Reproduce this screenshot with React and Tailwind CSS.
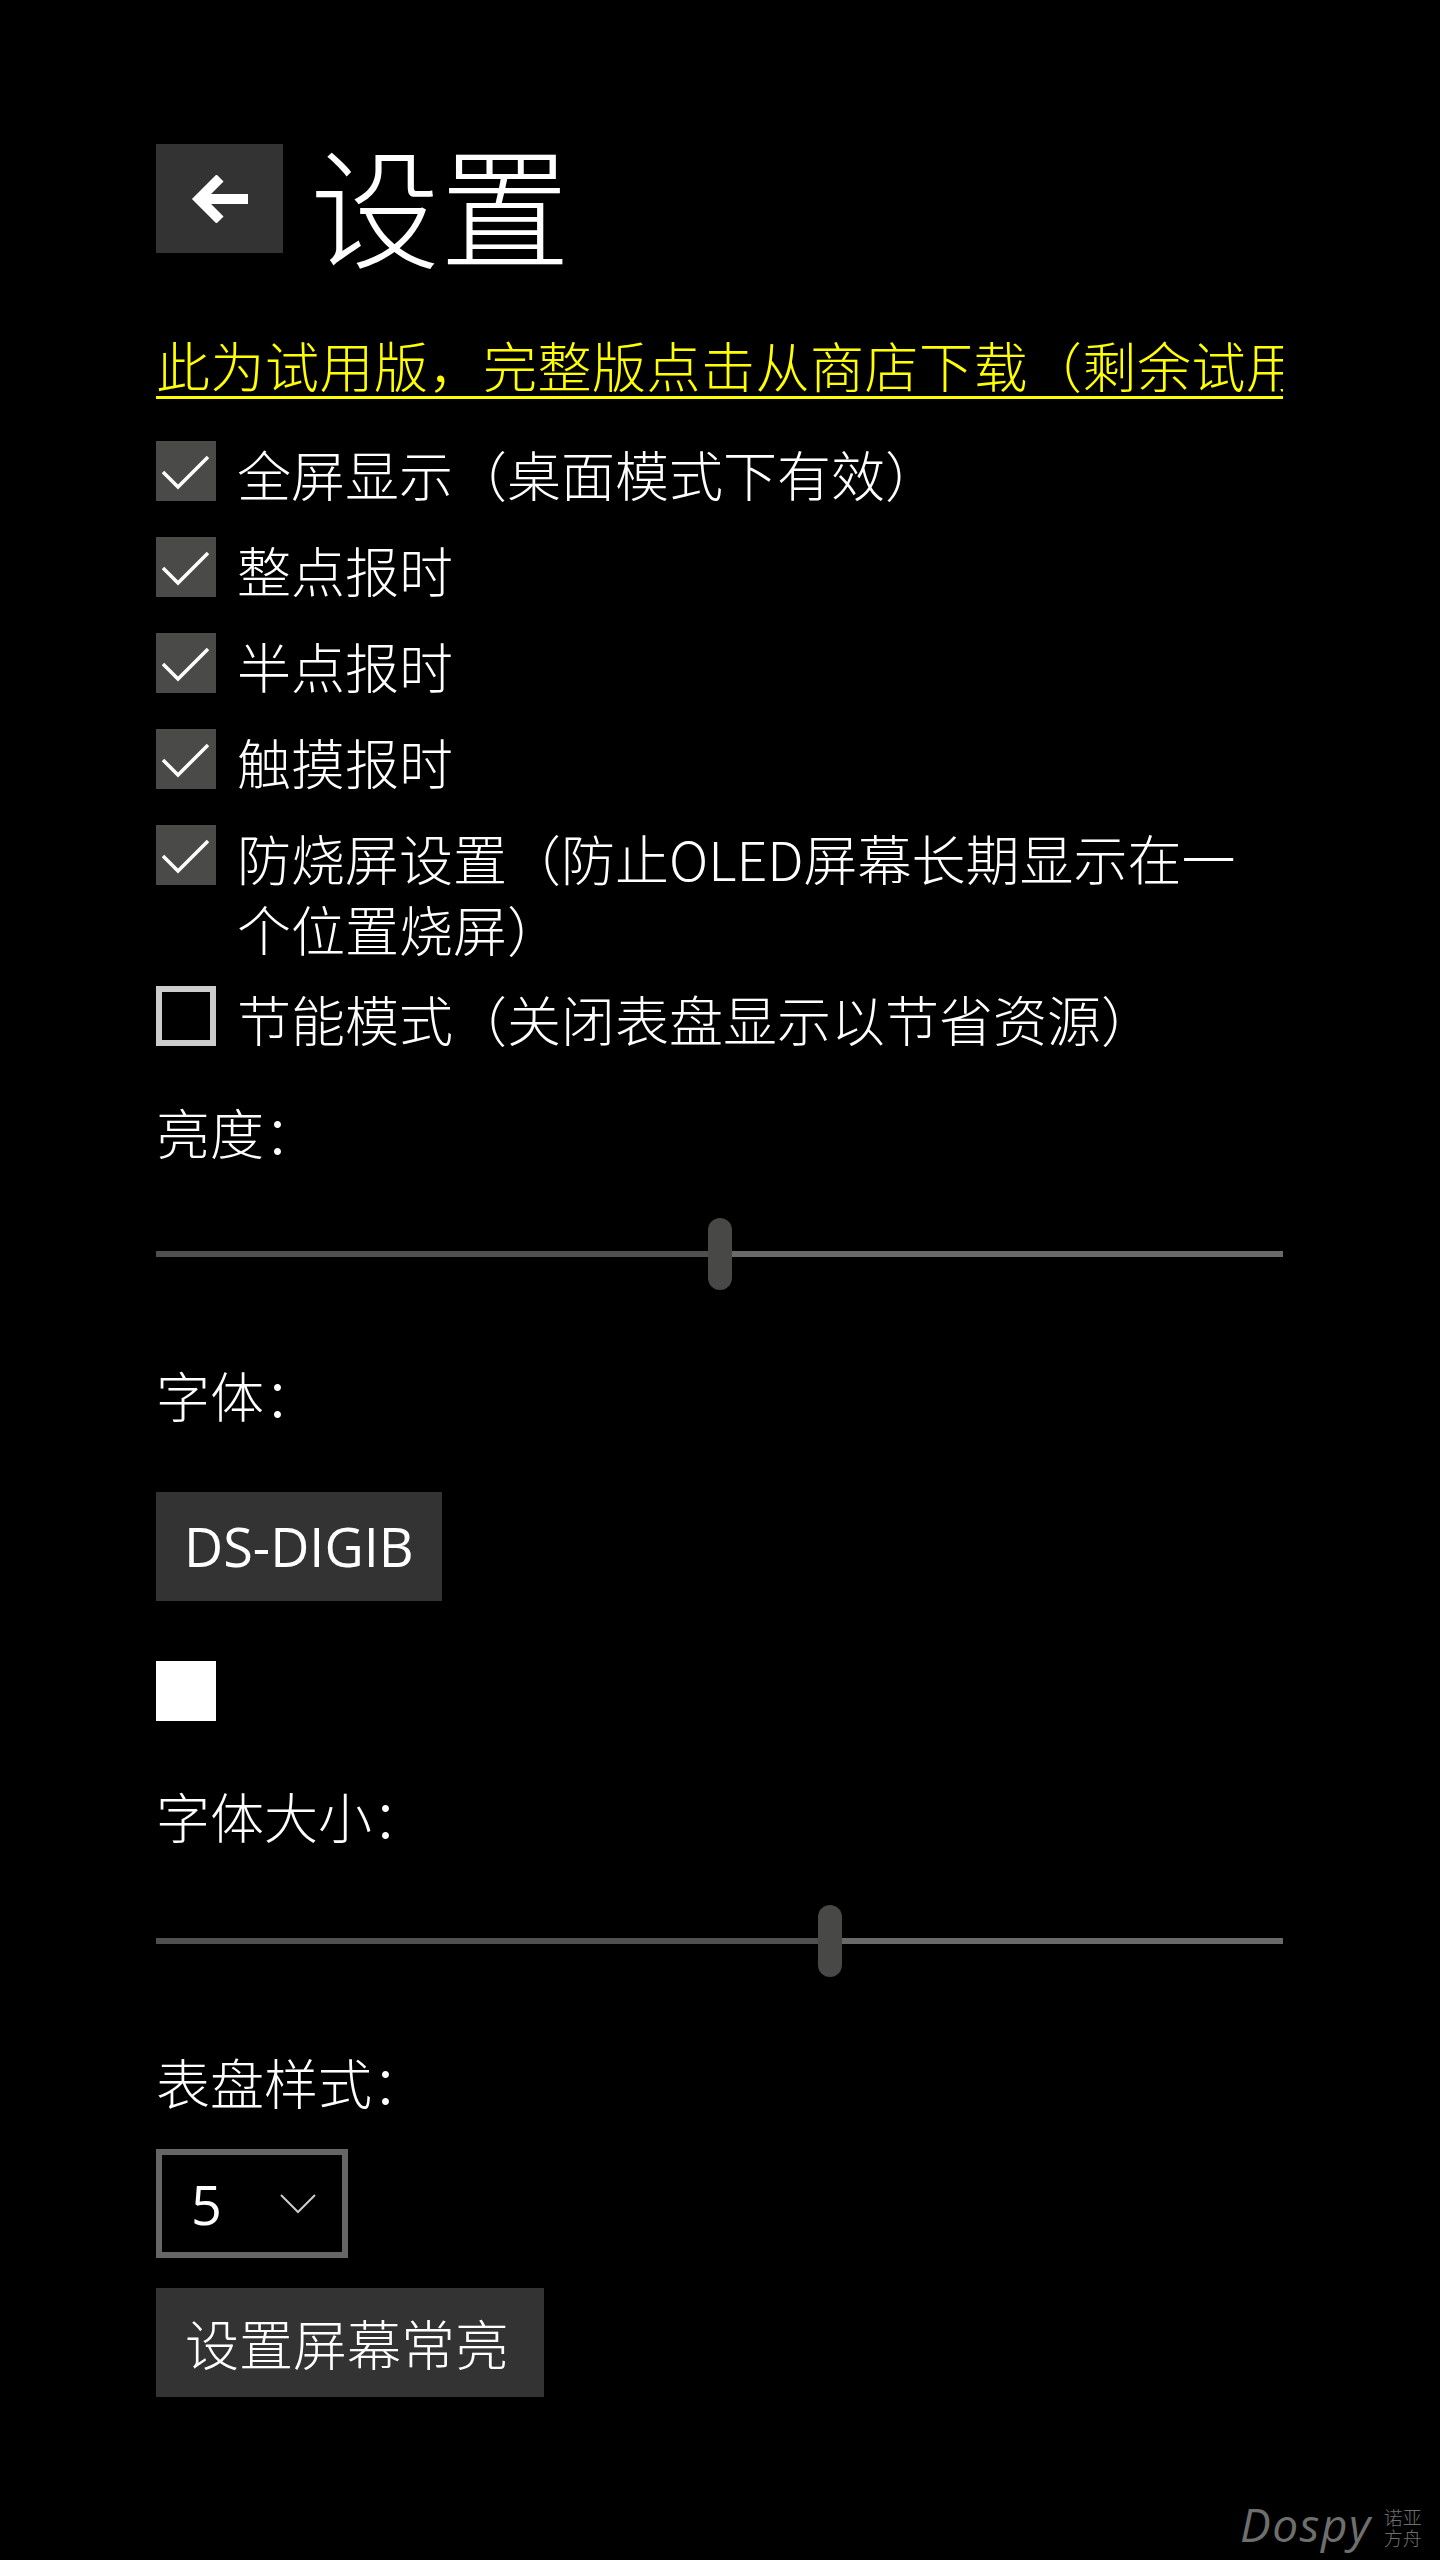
import React from "react";

const cjk = { fontFamily: '"Noto Sans CJK SC", "Noto Sans", sans-serif' };
const latin = { fontFamily: '"Open Sans", "Noto Sans CJK SC", sans-serif' };

function CheckBox({ checked }) {
  if (!checked) {
    return <div className="w-[60px] h-[60px] shrink-0 mt-[3px] border-[6px] border-[#cccccc]" />;
  }
  return (
    <div className="w-[60px] h-[60px] shrink-0 mt-[3px] bg-[#4a4a48]">
      <svg width="60" height="60" viewBox="0 0 60 60" fill="none">
        <path d="M7 31 L22 46 L52 16" stroke="white" strokeWidth="3.5" />
      </svg>
    </div>
  );
}

function Row({ checked, tall, children }) {
  return (
    <div className={`flex items-start gap-[21px] ${tall ? "h-[161px]" : "h-[96px]"}`}>
      <CheckBox checked={checked} />
      <div className="text-[54px] leading-[71px] font-light text-white">{children}</div>
    </div>
  );
}

function Slider({ value }) {
  return (
    <div className="flex items-center h-[72px] w-full">
      <div className="h-[6px] bg-[#4f4f4f] basis-0" style={{ flexGrow: value }} />
      <div className="w-[24px] h-[72px] rounded-full bg-[#484846] shrink-0" />
      <div className="h-[6px] bg-[#6a6a6a] basis-0" style={{ flexGrow: 100 - value }} />
    </div>
  );
}

export default function App() {
  return (
    <div className="relative w-[1440px] min-h-[2560px] bg-black text-white pl-[156px] pr-[157px] pt-[136px] font-light" style={cjk}>
      {/* Header */}
      <div className="flex items-start">
        <button className="mt-[8px] w-[127px] h-[109px] bg-[#333333] flex items-center justify-center">
          <svg width="60" height="48" viewBox="0 0 60 48" fill="none">
            <path d="M58 24 H8" stroke="white" strokeWidth="10" />
            <path d="M30 3 L9 24 L30 45" stroke="white" strokeWidth="10" />
          </svg>
        </button>
        <h1 className="ml-[27px] text-[130px] leading-[130px] font-light">设置</h1>
      </div>

      {/* Trial link */}
      <div className="mt-[63px] h-[71px] overflow-hidden whitespace-nowrap text-[54px] leading-[71px] tracking-[0.5px] text-[#ffff00] underline decoration-[3px] underline-offset-[8px]">
        此为试用版，完整版点击从商店下载（剩余试用期7天）
      </div>

      {/* Options */}
      <div className="mt-[38px] flex flex-col">
        <Row checked>全屏显示（桌面模式下有效）</Row>
        <Row checked>整点报时</Row>
        <Row checked>半点报时</Row>
        <Row checked>触摸报时</Row>
        <Row checked tall>
          防烧屏设置（防止OLED屏幕长期显示在一
          <br />
          个位置烧屏）
        </Row>
        <div className="flex items-start gap-[21px] h-[71px]">
          <CheckBox checked={false} />
          <div className="text-[54px] leading-[71px]">节能模式（关闭表盘显示以节省资源）</div>
        </div>
      </div>

      <div className="mt-[42px] text-[54px] leading-[71px]">亮度：</div>
      <div className="mt-[51px]">
        <Slider value={50} />
      </div>

      <div className="mt-[69px] text-[54px] leading-[71px]">字体：</div>
      <button className="mt-[62px] h-[109px] w-[286px] bg-[#333333] flex items-center pl-[28px] text-[54px] text-white font-normal" style={latin}>
        DS-DIGIB
      </button>
      <div className="mt-[60px] w-[60px] h-[60px] bg-white" />

      <div className="mt-[59px] text-[54px] leading-[71px]">字体大小：</div>
      <div className="mt-[54px]">
        <Slider value={60} />
      </div>

      <div className="mt-[69px] text-[54px] leading-[71px]">表盘样式：</div>
      <div className="mt-[32px] w-[192px] h-[109px] border-[6px] border-[#666666] flex items-center pl-[29px] font-normal" style={latin}>
        <span className="text-[54px] leading-none">5</span>
        <svg className="ml-[58px]" width="36" height="20" viewBox="0 0 36 20" fill="none">
          <path d="M1 1 L18 18 L35 1" stroke="#cccccc" strokeWidth="2" />
        </svg>
      </div>
      <button className="mt-[30px] h-[109px] w-[388px] pl-[29px] bg-[#333333] flex items-center text-[54px] text-white">
        设置屏幕常亮
      </button>

      {/* Watermark */}
      <div className="absolute left-[1240px] top-[2498px] flex items-end gap-[12px] text-[#6e6e6e]">
        <span className="italic text-[46px] leading-[52px] tracking-[1.5px] font-normal" style={latin}>Dospy</span>
        <div className="flex flex-col text-[19px] leading-[21px] mb-[2px]">
          <span>诺亚</span>
          <span>方舟</span>
        </div>
      </div>
    </div>
  );
}
